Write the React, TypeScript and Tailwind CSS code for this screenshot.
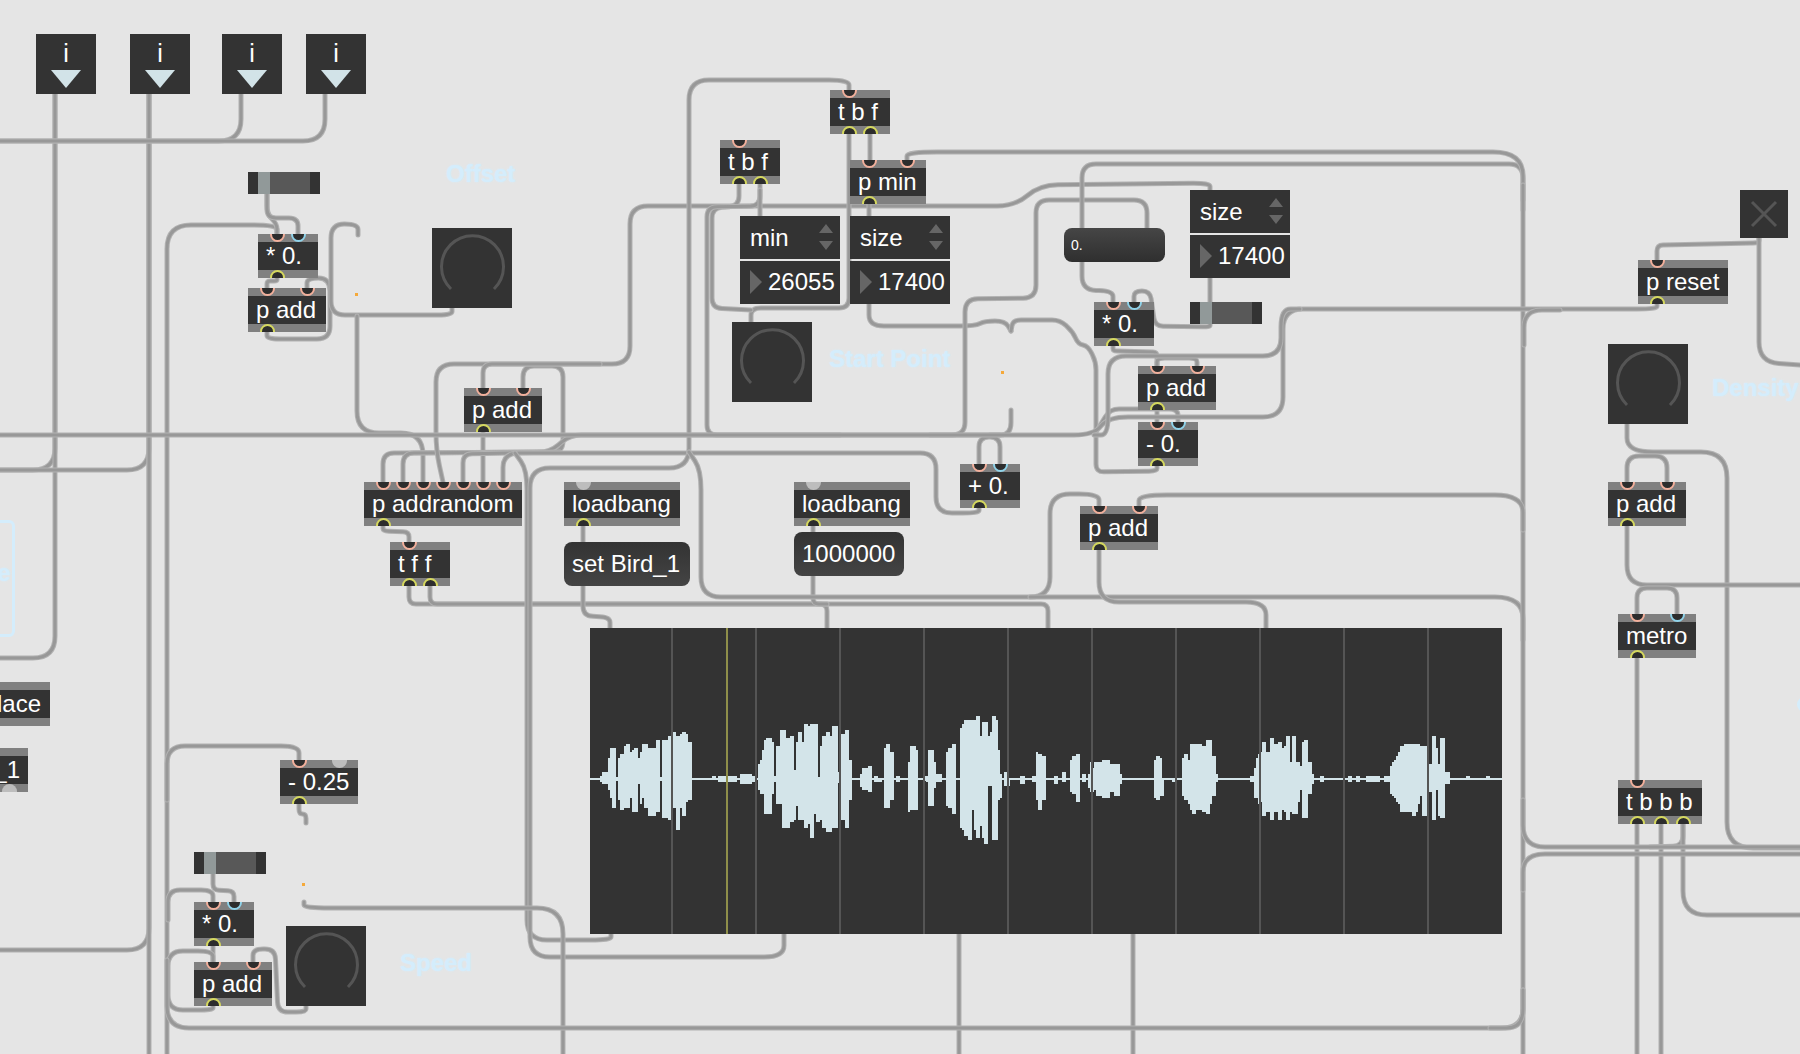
const sans = "font-['Liberation_Sans',Arial,sans-serif]";

// every wire: [corner radius, x, y, x, y, ...] in canvas pixels
const wires: number[][] = [
  // inlet numbers on top
  [22, 55, 94, 55, 470, 0, 470],
  [22, 55, 94, 55, 658, 0, 658],
  [22, 149, 94, 149, 470, 0, 470],
  [22, 149, 94, 149, 950, 0, 950],
  [0, 149, 94, 149, 1054],
  [22, 241, 94, 241, 141, 0, 141],
  [22, 325, 94, 325, 141, 0, 141],
  // offset group
  [24, 277, 234, 277, 225, 167, 225, 167, 1054],
  [8, 267, 194, 267, 214, 277, 224, 277, 234],
  [9, 267, 194, 267, 218, 298, 218, 298, 234],
  [3, 277, 278, 277, 281, 267, 281, 267, 288],
  [13, 267, 332, 267, 339, 330, 339, 330, 278, 307, 278, 307, 288],
  [14, 358, 235, 358, 224, 331, 224, 331, 315, 452, 315, 452, 308],
  [22, 357, 316, 357, 433, 423, 433, 423, 482],
  // addrandom and its add
  [0, 483, 432, 483, 482],
  [11, 383, 482, 383, 453, 563, 452, 563, 366, 523, 366, 523, 388],
  [11, 403, 482, 403, 453, 550, 452, 570, 435, 1000, 435],
  [18, 443, 482, 436, 450, 436, 364, 630, 364, 630, 206, 1015, 206, 1040, 185, 1210, 183, 1210, 190],
  [9, 483, 388, 483, 364, 600, 364],
  [9, 463, 482, 463, 454, 560, 452],
  [16, 503, 482, 503, 453, 936, 453, 936, 513, 979, 513, 979, 508],
  [6, 383, 526, 383, 531, 409, 532, 409, 542],
  [7, 409, 586, 409, 604, 827, 604, 827, 628],
  [7, 430, 586, 430, 604, 1048, 604, 1048, 628],
  // loadbangs and buffer
  [0, 583, 526, 583, 542],
  [10, 583, 586, 583, 616, 610, 617, 610, 628],
  [0, 813, 526, 813, 532],
  [6, 813, 576, 813, 604, 827, 604],
  [20, 515, 453, 527, 470, 527, 940, 611, 940, 611, 934],
  [20, 849, 90, 849, 80, 689, 80, 689, 468, 530, 468, 530, 957, 784, 957, 784, 934],
  [20, 689, 452, 701, 470, 701, 597, 1050, 597, 1050, 494, 1099, 494, 1099, 506],
  [28, 1030, 597, 1523, 597, 1523, 640],
  [20, 1099, 550, 1099, 602, 1266, 602, 1266, 628],
  [0, 959, 934, 959, 1054],
  [0, 1133, 934, 1133, 1054],
  // start point group
  [0, 870, 134, 870, 160],
  [10, 849, 134, 849, 308, 751, 308, 751, 322],
  [10, 739, 184, 739, 206, 712, 208, 712, 308, 751, 310],
  [10, 760, 184, 760, 206, 707, 207, 707, 435, 840, 435],
  [0, 760, 190, 760, 216],
  [0, 869, 204, 869, 216],
  [15, 869, 304, 869, 326, 975, 326, 985, 321, 1005, 321, 1011, 331],
  [8, 1011, 331, 1013, 320, 1060, 320, 1073, 332, 1078, 344, 1088, 346, 1096, 362, 1096, 472, 1157, 471, 1157, 466],
  [13, 1147, 228, 1147, 200, 1036, 200, 1036, 298, 965, 299, 965, 435, 930, 435],
  [14, 1011, 410, 1011, 435, 990, 435],
  [10, 979, 464, 979, 437, 1000, 437, 1000, 464],
  [0, 1210, 278, 1210, 302],
  [8, 1134, 302, 1134, 291, 1150, 291, 1155, 326, 1210, 327, 1210, 324],
  [4, 1113, 346, 1113, 351, 1157, 352, 1157, 366],
  [8, 1197, 366, 1197, 358, 1157, 358, 1157, 366],
  [0, 1157, 410, 1157, 422],
  [9, 1178, 422, 1178, 409, 1110, 409, 1096, 432],
  [14, 1113, 302, 1113, 291, 1082, 290, 1082, 164, 1523, 164, 1523, 210],
  [30, 907, 160, 907, 152, 1523, 152, 1523, 200],
  [0, 1523, 185, 1523, 1054],
  [20, 1657, 304, 1657, 309, 1283, 309, 1283, 417, 1108, 417, 1094, 435, 0, 435],
  [18, 1300, 309, 1281, 309, 1281, 356, 1108, 356, 1108, 435, 1094, 435],
  [20, 1560, 310, 1524, 310, 1524, 345],
  [28, 1139, 506, 1139, 495, 1523, 495, 1523, 530],
  // speed group, bottom left
  [18, 299, 760, 299, 746, 167, 746, 167, 800],
  [5, 299, 804, 299, 814, 306, 814, 306, 823],
  [26, 304, 902, 304, 908, 563, 908, 563, 1054],
  [6, 213, 874, 213, 890, 234, 891, 234, 902],
  [12, 213, 902, 213, 890, 168, 890, 168, 920],
  [0, 213, 946, 213, 962],
  [15, 213, 962, 213, 951, 168, 951, 168, 1010, 213, 1010, 213, 1006],
  [10, 253, 962, 253, 949, 275, 949, 278, 1012, 306, 1012, 306, 1006],
  [22, 167, 960, 167, 1028, 1523, 1028, 1523, 990],
  // right column
  [6, 1759, 238, 1759, 243, 1657, 245, 1657, 260],
  [20, 1759, 238, 1759, 362, 1800, 365],
  [26, 1627, 424, 1627, 452, 1727, 452, 1727, 848, 1800, 848],
  [12, 1627, 482, 1627, 456, 1667, 456, 1667, 482],
  [20, 1627, 526, 1627, 585, 1800, 585],
  [10, 1637, 614, 1637, 588, 1677, 588, 1677, 614],
  [0, 1637, 658, 1637, 780],
  [0, 1637, 824, 1637, 1054],
  [0, 1661, 824, 1661, 1054],
  [10, 1683, 824, 1683, 846, 1650, 847],
  [24, 1683, 824, 1683, 915, 1800, 915],
  [22, 1523, 800, 1523, 847, 1800, 847],
  [22, 1523, 890, 1523, 854, 1800, 854],
  [24, 1523, 990, 1523, 1028, 1490, 1028],
];

// [x0, x1, top, bottom], traced at 3x from the waveform, x as crop px + 1740 for the left part
const peaks: number[][] = [
  [60, 66, 468, 486], [66, 84, 456, 492], [84, 90, 414, 510], [90, 96, 384, 534], [96, 108, 384, 564], [108, 114, 470, 484],
  [114, 120, 414, 540], [120, 132, 402, 570], [132, 138, 378, 564], [138, 150, 372, 564], [150, 156, 396, 534], [156, 162, 390, 576],
  [162, 174, 384, 576], [174, 180, 414, 492], [180, 186, 396, 552], [186, 192, 372, 534], [192, 204, 372, 564], [204, 228, 384, 588],
  [228, 240, 360, 576], [240, 246, 470, 484], [246, 264, 360, 594], [264, 274, 348, 600], [278, 288, 336, 565], [288, 300, 348, 630],
  [300, 306, 342, 564], [306, 318, 336, 588], [318, 324, 342, 546], [324, 336, 366, 540], [396, 408, 468, 480], [414, 470, 468, 486],
  [480, 516, 462, 492], [516, 524, 468, 486], [534, 540, 432, 510], [540, 546, 420, 522], [546, 552, 390, 522], [552, 558, 360, 582],
  [558, 576, 354, 582], [576, 582, 366, 522], [582, 588, 468, 486], [588, 600, 378, 552], [600, 606, 330, 552], [606, 618, 330, 624],
  [618, 630, 354, 624], [630, 642, 348, 606], [642, 648, 450, 600], [648, 654, 366, 558], [654, 666, 336, 600], [666, 672, 366, 600],
  [672, 684, 312, 624], [684, 690, 318, 612], [690, 702, 312, 654], [702, 708, 312, 582], [708, 714, 312, 606], [714, 720, 470, 606],
  [720, 726, 378, 600], [726, 738, 348, 624], [738, 750, 336, 636], [750, 756, 348, 636], [756, 774, 318, 624], [774, 780, 456, 490],
  [782, 796, 342, 600], [796, 808, 330, 624], [808, 816, 420, 540], [840, 846, 462, 500], [846, 864, 444, 510], [864, 876, 438, 516],
  [882, 894, 468, 486], [894, 906, 474, 486], [912, 918, 384, 564], [918, 930, 372, 564], [930, 942, 396, 540], [948, 960, 468, 486],
  [984, 990, 426, 576], [990, 1008, 378, 570], [1008, 1014, 390, 570], [1032, 1038, 468, 484], [1038, 1044, 468, 486], [1044, 1062, 390, 558],
  [1062, 1068, 426, 504], [1068, 1086, 462, 486], [1098, 1104, 396, 558], [1104, 1116, 384, 564], [1116, 1128, 372, 582], [1140, 1146, 324, 624],
  [1146, 1152, 312, 630], [1152, 1164, 300, 648], [1164, 1176, 300, 660], [1176, 1182, 300, 570], [1182, 1188, 300, 630], [1188, 1200, 288, 654],
  [1200, 1206, 348, 618], [1206, 1212, 306, 654], [1212, 1224, 306, 672], [1224, 1230, 348, 498], [1230, 1236, 336, 498], [1236, 1248, 288, 660],
  [1248, 1254, 300, 660], [1254, 1260, 390, 540],
  [1260, 1266, 462, 534], [1272, 1281, 456, 498], [1284, 1290, 475, 498], [1320, 1335, 468, 492], [1356, 1368, 468, 486], [1368, 1374, 396, 540],
  [1374, 1386, 402, 570], [1386, 1398, 408, 540], [1422, 1434, 468, 492], [1446, 1458, 456, 486], [1470, 1476, 420, 516], [1476, 1488, 408, 522],
  [1488, 1500, 402, 546], [1506, 1518, 462, 486], [1524, 1530, 462, 504], [1530, 1536, 426, 516], [1538, 1542, 444, 516], [1542, 1548, 426, 510],
  [1548, 1566, 426, 528], [1566, 1590, 420, 534], [1590, 1602, 432, 516], [1602, 1620, 432, 528], [1620, 1626, 462, 492], [1722, 1728, 420, 534],
  [1728, 1740, 408, 540], [1740, 1746, 414, 528], [1746, 1752, 474, 528], [1776, 1785, 474, 486], [1806, 1812, 414, 528], [1812, 1824, 402, 540],
  [1824, 1830, 420, 552], [1830, 1836, 372, 570], [1836, 1848, 372, 582], [1848, 1866, 372, 570], [1866, 1878, 378, 576], [1878, 1890, 360, 582],
  [1890, 1896, 360, 552], [1896, 1908, 408, 528], [1908, 1914, 462, 486], [2010, 2022, 468, 486], [2022, 2028, 444, 534], [2028, 2034, 414, 534],
  [2034, 2039, 402, 552], [2042, 2046, 396, 546], [2046, 2058, 366, 588], [2058, 2070, 396, 576], [2070, 2082, 354, 600], [2082, 2094, 372, 576],
  [2094, 2106, 366, 600], [2106, 2112, 384, 570], [2112, 2118, 378, 576], [2118, 2130, 348, 600], [2130, 2136, 426, 576], [2136, 2148, 348, 582],
  [2148, 2154, 426, 582], [2154, 2160, 426, 546], [2160, 2166, 438, 510], [2166, 2172, 366, 594], [2172, 2184, 360, 594], [2184, 2196, 426, 522],
  [2196, 2202, 462, 492], [2220, 2232, 468, 486], [2304, 2316, 468, 486], [2328, 2340, 468, 486], [2358, 2400, 468, 486], [2412, 2430, 468, 486],
  [2430, 2436, 438, 522], [2436, 2442, 426, 528], [2442, 2448, 420, 534], [2448, 2454, 408, 546], [2454, 2460, 396, 552], [2460, 2472, 378, 576],
  [2472, 2496, 372, 576], [2496, 2508, 372, 588], [2508, 2514, 372, 576], [2514, 2520, 372, 552], [2520, 2526, 378, 528], [2526, 2540, 378, 588],
  [2548, 2556, 432, 516], [2556, 2568, 348, 600], [2568, 2574, 384, 510], [2574, 2580, 432, 588], [2580, 2596, 354, 594], [2596, 2610, 456, 492],
  [2658, 2670, 468, 480], [2718, 2730, 468, 480],
];

const wirePath = (w: number[]) => {
  const r = w[0];
  const pts: number[][] = [];
  for (let i = 1; i < w.length; i += 2) pts.push([w[i], w[i + 1]]);
  let d = `M${pts[0][0]} ${pts[0][1]}`;
  for (let i = 1; i < pts.length - 1; i++) {
    const [ax, ay] = pts[i - 1];
    const [bx, by] = pts[i];
    const [cx, cy] = pts[i + 1];
    const la = Math.hypot(bx - ax, by - ay);
    const lc = Math.hypot(cx - bx, cy - by);
    const ra = Math.min(r, la / 2);
    const rc = Math.min(r, lc / 2);
    d += ` L${bx - ((bx - ax) / la) * ra} ${by - ((by - ay) / la) * ra}`;
    d += ` Q${bx} ${by} ${bx + ((cx - bx) / lc) * rc} ${by + ((cy - by) / lc) * rc}`;
  }
  const last = pts[pts.length - 1];
  return d + ` L${last[0]} ${last[1]}`;
};

type Kind = "in" | "cold" | "off";

const Port = ({ left, kind, bottom }: { left: number; kind: Kind; bottom?: boolean }) => {
  const ring =
    kind === "off"
      ? "bg-[#bdbdbd]"
      : bottom
        ? "bg-[#2d2d2d] border-2 border-[#d5d85e]"
        : kind === "cold"
          ? "bg-[#2d2d2d] border-2 border-[#8fd3ea]"
          : "bg-[#2d2d2d] border-2 border-[#f3b09c]";
  return (
    <span
      className={`absolute size-[15px] rounded-full ${ring}`}
      style={bottom ? { left: left - 7.5, bottom: -7 } : { left: left - 7.5, top: -7 }}
    />
  );
};

// a Max object box: grey title bars with the ports, dark band with the text
const Obj = ({
  x,
  y,
  w,
  text,
  ins = [],
  outs = [],
  cold = [],
  off = [],
}: {
  x: number;
  y: number;
  w: number;
  text: string;
  ins?: number[];
  outs?: number[];
  cold?: number[];
  off?: number[];
}) => (
  <div className="absolute h-[44px] overflow-hidden bg-[#808080]" style={{ left: x, top: y, width: w }}>
    <div className="mt-[8px] h-[28px] bg-[#333333] pl-[8px] text-[24px] leading-[28px] text-white whitespace-pre">{text}</div>
    {ins.map((p) => (
      <Port key={p} left={p - x} kind="in" />
    ))}
    {cold.map((p) => (
      <Port key={p} left={p - x} kind="cold" />
    ))}
    {off.map((p) => (
      <Port key={p} left={p - x} kind="off" />
    ))}
    {outs.map((p) => (
      <Port key={p} left={p - x} kind="in" bottom />
    ))}
  </div>
);

const Inlet = ({ x }: { x: number }) => (
  <div className="absolute top-[34px] flex h-[60px] w-[60px] flex-col items-center bg-[#333333]" style={{ left: x }}>
    <span className="mt-[5px] text-[25px] leading-[28px] text-white">i</span>
    <svg width="30" height="18" viewBox="0 0 30 18" className="mt-[3px]">
      <path d="M0 0H30L15 18Z" fill="#d2e3e8" />
    </svg>
  </div>
);

const Dial = ({ x, y }: { x: number; y: number }) => (
  <div className="absolute h-[80px] w-[80px] bg-[#333333]" style={{ left: x, top: y }}>
    <svg width="80" height="80" viewBox="0 0 80 80">
      <path d="M19 61A31 31 0 1 1 62 61" fill="none" stroke="#555555" strokeWidth="3" />
    </svg>
  </div>
);

const Slider = ({ x, y }: { x: number; y: number }) => (
  <div className="absolute flex h-[22px] w-[72px] bg-[#333333]" style={{ left: x, top: y }}>
    <div className="ml-[10px] w-[12px] bg-[#919999]" />
    <div className="mr-[10px] flex-1 bg-[#585858]" />
  </div>
);

const Menu = ({ x, y, w, label, value }: { x: number; y: number; w: number; label: string; value: string }) => (
  <div className="absolute flex flex-col gap-[2px] text-[24px] text-white" style={{ left: x, top: y, width: w }}>
    <div className="flex h-[43px] items-center justify-between bg-[#333333] pl-[10px] pr-[6px]">
      <span>{label}</span>
      <svg width="16" height="27" viewBox="0 0 16 27">
        <path d="M8 0L15 9H1ZM1 17H15L8 26Z" fill="#666666" />
      </svg>
    </div>
    <div className="flex h-[43px] items-center gap-[5px] bg-[#333333] pb-[1px] pl-[10px]">
      <svg width="13" height="24" viewBox="0 0 13 24">
        <path d="M0 0L12 12L0 24Z" fill="#666666" />
      </svg>
      <span>{value}</span>
    </div>
  </div>
);

const Label = ({ x, y, text }: { x: number; y: number; text: string }) => (
  <span
    className="absolute text-[24px] font-bold leading-[28px] text-[#d4edfc] whitespace-pre [text-shadow:0_0_2px_#d4edfc]"
    style={{ left: x, top: y }}
  >
    {text}
  </span>
);

const Dot = ({ x, y }: { x: number; y: number }) => (
  <span className="absolute size-[3px] bg-[#f5a93a]" style={{ left: x, top: y }} />
);

const Waveform = () => (
  <svg
    className="absolute left-[590px] top-[628px]"
    width="912"
    height="306"
    viewBox="590 628 912 306"
    shapeRendering="crispEdges"
  >
    <rect x="590" y="628" width="912" height="306" fill="#333333" />
    <rect x="590" y="778" width="912" height="2" fill="#d3e4e9" />
    {peaks.map(([a, b, t, u]) => (
      <rect key={a} x={a / 3 + 580} y={t / 3 + 620} width={(b - a) / 3} height={(u - t) / 3} fill="#d3e4e9" />
    ))}
    {[672, 756, 840, 924, 1008, 1092, 1176, 1260, 1344, 1428].map((g) => (
      <rect key={g} x={g - 1} y="628" width="2" height="306" fill="#555555" />
    ))}
    <rect x="726" y="628" width="2" height="306" fill="#8f8f4a" />
  </svg>
);

export default function App() {
  return (
    <div className={`relative h-[1054px] w-[1800px] overflow-hidden bg-[#e5e5e5] ${sans}`}>
      <svg className="absolute inset-0" width="1800" height="1054" fill="none" strokeLinecap="round">
        {wires.map((w, i) => (
          <g key={i}>
            <path d={wirePath(w)} stroke="#b2b2b2" strokeWidth="5" />
            <path d={wirePath(w)} stroke="#989898" strokeWidth="3" />
          </g>
        ))}
      </svg>

      <Inlet x={36} />
      <Inlet x={130} />
      <Inlet x={222} />
      <Inlet x={306} />

      <Label x={446} y={160} text="Offset" />
      <Label x={829} y={345} text="Start Point" />
      <Label x={1712} y={374} text="Density" />
      <Label x={400} y={949} text="Speed" />

      <Slider x={248} y={172} />
      <Obj x={258} y={234} w={60} text="* 0." ins={[277]} cold={[298]} outs={[277]} />
      <Obj x={248} y={288} w={78} text="p add" ins={[267, 307]} outs={[267]} />
      <Dial x={432} y={228} />
      <Dot x={355} y={293} />

      <Obj x={464} y={388} w={78} text="p add" ins={[483, 523]} outs={[483]} />
      <Obj x={364} y={482} w={158} text="p addrandom" ins={[383, 403, 423, 443, 463, 483, 503]} outs={[383]} />
      <Obj x={390} y={542} w={60} text="t f f" ins={[409]} outs={[409, 430]} />

      <Obj x={830} y={90} w={60} text="t b f" ins={[849]} outs={[849, 870]} />
      <Obj x={720} y={140} w={60} text="t b f" ins={[739]} outs={[739, 760]} />
      <Obj x={850} y={160} w={76} text="p min" ins={[869, 907]} outs={[869]} />
      <Menu x={740} y={216} w={100} label="min" value="26055" />
      <Menu x={850} y={216} w={100} label="size" value="17400" />
      <Menu x={1190} y={190} w={100} label="size" value="17400" />
      <Dial x={732} y={322} />
      <Dot x={1001} y={371} />

      <div className="absolute left-[1064px] top-[228px] flex h-[34px] w-[101px] items-center rounded-[8px] bg-linear-to-b from-[#464646] to-[#2f2f2f] pl-[7px] text-[14px] text-white">
        0.
      </div>
      <Obj x={1094} y={302} w={60} text="* 0." ins={[1113]} cold={[1134]} outs={[1113]} />
      <Slider x={1190} y={302} />
      <Obj x={1138} y={366} w={78} text="p add" ins={[1157, 1197]} outs={[1157]} />
      <Obj x={1138} y={422} w={60} text="- 0." ins={[1157]} cold={[1178]} outs={[1157]} />
      <Obj x={960} y={464} w={60} text="+ 0." ins={[979]} cold={[1000]} outs={[979]} />
      <Obj x={1080} y={506} w={78} text="p add" ins={[1099, 1139]} outs={[1099]} />

      <Obj x={564} y={482} w={116} text="loadbang" off={[583]} outs={[583]} />
      <div className="absolute left-[564px] top-[542px] flex h-[44px] w-[126px] items-center rounded-[8px] bg-linear-to-b from-[#333333] to-[#444444] pl-[8px] text-[24px] text-white">
        set Bird_1
      </div>
      <Obj x={794} y={482} w={116} text="loadbang" off={[813]} outs={[813]} />
      <div className="absolute left-[794px] top-[532px] flex h-[44px] w-[110px] items-center rounded-[8px] bg-linear-to-b from-[#333333] to-[#444444] pl-[8px] text-[24px] text-white">
        1000000
      </div>

      <Waveform />

      {/* cut off at the left edge of the window */}
      <div className="absolute left-[-40px] top-[520px] h-[117px] w-[55px] rounded-[6px] border-[3px] border-[#d4edfc]" />
      <Label x={-12} y={559} text="re" />
      <div className="absolute left-[-60px] top-[682px] h-[44px] w-[110px] overflow-hidden bg-[#808080]">
        <div className="mt-[8px] h-[28px] bg-[#333333] pr-[9px] text-right text-[24px] leading-[28px] text-white">lace</div>
      </div>
      <div className="absolute left-[-60px] top-[748px] h-[44px] w-[88px] overflow-hidden bg-[#808080]">
        <div className="mt-[8px] h-[28px] bg-[#333333] pr-[8px] text-right text-[24px] leading-[28px] text-white">_1</div>
        <span className="absolute bottom-[-7px] left-[62px] size-[15px] rounded-full bg-[#bdbdbd]" />
      </div>

      <Obj x={280} y={760} w={78} text="- 0.25" ins={[299]} off={[339]} outs={[299]} />
      <Slider x={194} y={852} />
      <Obj x={194} y={902} w={60} text="* 0." ins={[213]} cold={[234]} outs={[213]} />
      <Obj x={194} y={962} w={78} text="p add" ins={[213, 253]} outs={[213]} />
      <Dial x={286} y={926} />
      <Dot x={302} y={883} />

      <div className="absolute left-[1740px] top-[190px] h-[48px] w-[48px] bg-[#333333]">
        <svg width="48" height="48" viewBox="0 0 48 48">
          <path d="M12 12L36 36M36 12L12 36" stroke="#555555" strokeWidth="3" />
        </svg>
      </div>
      <Obj x={1638} y={260} w={90} text="p reset" ins={[1657]} outs={[1657]} />
      <Dial x={1608} y={344} />
      <Obj x={1608} y={482} w={78} text="p add" ins={[1627, 1667]} outs={[1627]} />
      <Obj x={1618} y={614} w={78} text="metro" ins={[1637]} cold={[1677]} outs={[1637]} />
      <Obj x={1618} y={780} w={84} text="t b b b" ins={[1637]} outs={[1637, 1661, 1683]} />
      <span className="absolute left-[1797px] top-[697px] size-[15px] rounded-full bg-[#d4edfc]" />
    </div>
  );
}
